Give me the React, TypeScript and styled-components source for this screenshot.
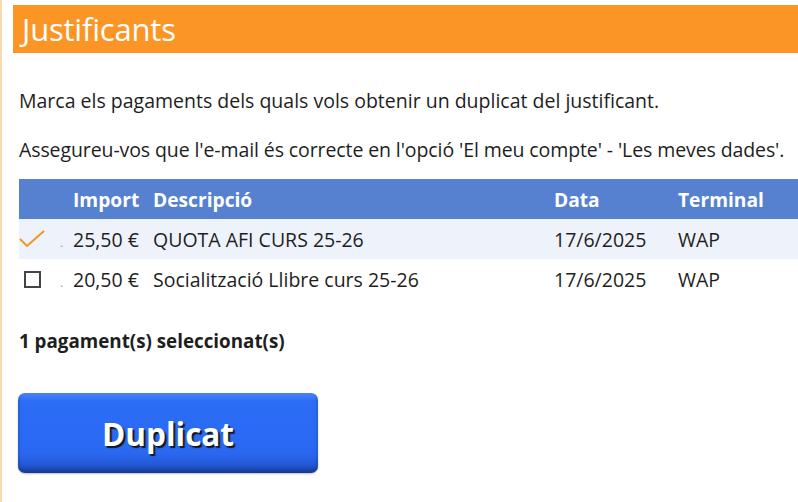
import styled, { createGlobalStyle } from 'styled-components';

const Global = createGlobalStyle`
  *, *::before, *::after { box-sizing: border-box; }
  body {
    margin: 0;
    background: #ffffff;
    font-family: "Open Sans", "Noto Sans", sans-serif;
    color: #1e1e1e;
  }
`;

const Page = styled.div`
  border-left: 2px solid #f8dcb0;
  min-height: 502px;
  padding: 5px 0 0 11px;
`;

const TitleBar = styled.div`
  background: #fb9526;
  height: 48px;
  display: flex;
  align-items: center;
  padding-left: 9px;
  padding-bottom: 1px;
`;

const Title = styled.h1`
  margin: 0;
  font-size: 31px;
  font-weight: 400;
  color: #ffffff;
  letter-spacing: -0.2px;
`;

const Body = styled.div`
  padding-left: 6px;
`;

const Text = styled.p`
  margin: 0 0 21px;
  font-size: 19.5px;
  line-height: 28px;
  white-space: nowrap;
  &:last-child {
    margin-bottom: 0;
    letter-spacing: -0.1px;
  }
`;

const Intro = styled.div`
  padding-top: 34px;
  padding-bottom: 15px;
`;

const Table = styled.div`
  display: grid;
  grid-template-columns: 41px 13px 80px 401px 124px 1fr;
  font-size: 19.5px;
`;

const Row = styled.div<{ $variant: 'head' | 'selected' | 'plain' }>`
  display: contents;
  & > * {
    height: 40px;
    display: flex;
    align-items: center;
    background: ${(p) =>
      p.$variant === 'head' ? '#5680d0' : p.$variant === 'selected' ? '#eef3fb' : '#ffffff'};
    color: ${(p) => (p.$variant === 'head' ? '#ffffff' : '#1e1e1e')};
    font-weight: ${(p) => (p.$variant === 'head' ? 700 : 400)};
    font-size: ${(p) => (p.$variant === 'head' ? '19.2px' : '19.5px')};
    white-space: nowrap;
  }
`;

const Cell = styled.div``;

const CheckCell = styled.div`
  justify-content: flex-start;
`;

const Dot = styled.div`
  color: #9a9a9a;
  font-size: 12px;
  padding-top: 6px;
`;

const Box = styled.span`
  width: 17px;
  height: 17px;
  border: 2px solid #444;
  margin-left: 5px;
`;

const Summary = styled.div`
  font-size: 18.8px;
  font-weight: 700;
  padding-top: 29px;
  line-height: 26px;
`;

const DuplicateButton = styled.button`
  margin-top: 39px;
  margin-left: -1px;
  width: 300px;
  height: 80px;
  border: none;
  border-radius: 7px;
  background: linear-gradient(#4a85fa 0%, #2c6df6 10%, #2a68f2 75%, #2458d6 90%, #1d45a8 100%);
  box-shadow: inset 0 -3px 4px rgba(10, 30, 100, 0.35), 0 1px 2px rgba(0, 0, 0, 0.25);
  color: #ffffff;
  font-family: "Open Sans", "Noto Sans", sans-serif;
  font-size: 31.5px;
  font-weight: 700;
  text-shadow: 2px 2px 1px #101828;
  cursor: pointer;
  padding: 0;
`;

const rows = [
  { checked: true, amount: '25,50 €', desc: 'QUOTA AFI CURS 25-26', date: '17/6/2025', term: 'WAP' },
  { checked: false, amount: '20,50 €', desc: 'Socialització Llibre curs 25-26', date: '17/6/2025', term: 'WAP' },
];

function Check() {
  return (
    <svg width="26" height="18" viewBox="0 0 26 18">
      <path d="M1 9 L8 16 L25 1" fill="none" stroke="#f7931e" strokeWidth="2" />
    </svg>
  );
}

export default function App() {
  return (
    <>
      <Global />
      <Page>
        <TitleBar>
          <Title>Justificants</Title>
        </TitleBar>
        <Body>
          <Intro>
            <Text>Marca els pagaments dels quals vols obtenir un duplicat del justificant.</Text>
            <Text>Assegureu-vos que l'e-mail és correcte en l'opció 'El meu compte' - 'Les meves dades'.</Text>
          </Intro>
          <Table>
            <Row $variant="head">
              <Cell />
              <Cell />
              <Cell>Import</Cell>
              <Cell>Descripció</Cell>
              <Cell>Data</Cell>
              <Cell>Terminal</Cell>
            </Row>
            {rows.map((r) => (
              <Row $variant={r.checked ? 'selected' : 'plain'} key={r.desc}>
                <CheckCell>{r.checked ? <Check /> : <Box />}</CheckCell>
                <Dot>.</Dot>
                <Cell>{r.amount}</Cell>
                <Cell>{r.desc}</Cell>
                <Cell>{r.date}</Cell>
                <Cell>{r.term}</Cell>
              </Row>
            ))}
          </Table>
          <Summary>1 pagament(s) seleccionat(s)</Summary>
          <DuplicateButton>Duplicat</DuplicateButton>
        </Body>
      </Page>
    </>
  );
}
